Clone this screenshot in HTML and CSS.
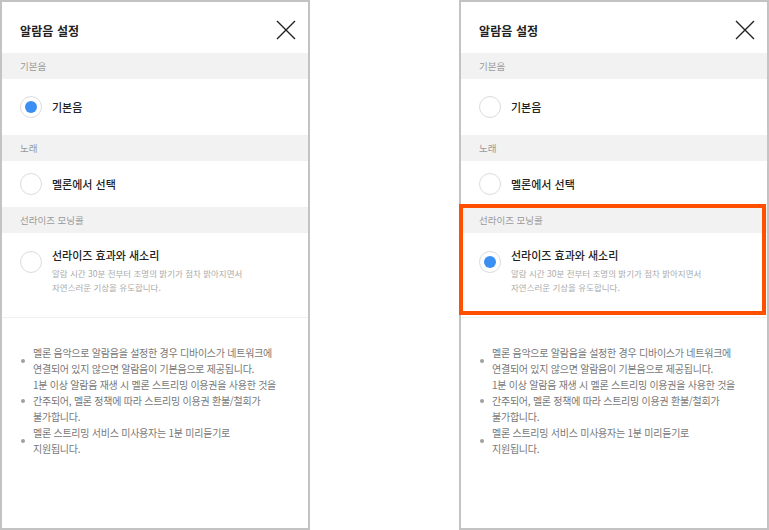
FILE: index.html
```html
<!DOCTYPE html>
<html lang="ko">
<head>
<meta charset="utf-8">
<title>알람음 설정</title>
<link rel="stylesheet" href="styles.css">
</head>
<body>
<div class="stage">
  <section class="panel">
    <header class="panel-head">
      <h1 class="panel-title">알람음 설정</h1>
      <button class="close" aria-label="닫기">
        <svg viewBox="0 0 20 20" width="20" height="20"><path d="M1 1L19 19M19 1L1 19" stroke="#222" stroke-width="1.4" fill="none"/></svg>
      </button>
    </header>
    <div class="group-label">기본음</div>
    <div class="option opt-basic"><span class="radio checked"></span><span class="opt-title">기본음</span></div>
    <div class="group-label">노래</div>
    <div class="option opt-song"><span class="radio"></span><span class="opt-title">멜론에서 선택</span></div>
    <div class="sunrise">
      <div class="group-label">선라이즈 모닝콜</div>
      <div class="option opt-sunrise">
        <span class="radio"></span>
        <div class="opt-body">
          <div class="opt-title">선라이즈 효과와 새소리</div>
          <p class="opt-desc">알람 시간 30분 전부터 조명의 밝기가 점차 밝아지면서<br>자연스러운 기상을 유도합니다.</p>
        </div>
      </div>
    </div>
    <ul class="notes">
      <li>멜론 음악으로 알람음을 설정한 경우 디바이스가 네트워크에<br>연결되어 있지 않으면 알람음이 기본음으로 제공됩니다.</li>
      <li>1분 이상 알람음 재생 시 멜론 스트리밍 이용권을 사용한 것을<br>간주되어, 멜론 정책에 따라 스트리밍 이용권 환불/철회가<br>불가합니다.</li>
      <li>멜론 스트리밍 서비스 미사용자는 1분 미리듣기로<br>지원됩니다.</li>
    </ul>
  </section>

  <section class="panel">
    <header class="panel-head">
      <h1 class="panel-title">알람음 설정</h1>
      <button class="close" aria-label="닫기">
        <svg viewBox="0 0 20 20" width="20" height="20"><path d="M1 1L19 19M19 1L1 19" stroke="#222" stroke-width="1.4" fill="none"/></svg>
      </button>
    </header>
    <div class="group-label">기본음</div>
    <div class="option opt-basic"><span class="radio"></span><span class="opt-title">기본음</span></div>
    <div class="group-label">노래</div>
    <div class="option opt-song"><span class="radio"></span><span class="opt-title">멜론에서 선택</span></div>
    <div class="sunrise highlight">
      <div class="group-label">선라이즈 모닝콜</div>
      <div class="option opt-sunrise">
        <span class="radio checked"></span>
        <div class="opt-body">
          <div class="opt-title">선라이즈 효과와 새소리</div>
          <p class="opt-desc">알람 시간 30분 전부터 조명의 밝기가 점차 밝아지면서<br>자연스러운 기상을 유도합니다.</p>
        </div>
      </div>
    </div>
    <ul class="notes">
      <li>멜론 음악으로 알람음을 설정한 경우 디바이스가 네트워크에<br>연결되어 있지 않으면 알람음이 기본음으로 제공됩니다.</li>
      <li>1분 이상 알람음 재생 시 멜론 스트리밍 이용권을 사용한 것을<br>간주되어, 멜론 정책에 따라 스트리밍 이용권 환불/철회가<br>불가합니다.</li>
      <li>멜론 스트리밍 서비스 미사용자는 1분 미리듣기로<br>지원됩니다.</li>
    </ul>
  </section>
</div>
</body>
</html>
```

FILE: styles.css
```css
* { box-sizing: border-box; }
html, body { margin: 0; padding: 0; background: #fff; }
body {
  font-family: "Noto Sans CJK KR", "Noto Sans", sans-serif;
  color: #222;
}
.stage {
  display: flex;
  gap: 149px;
  width: 769px;
  height: 530px;
}
.panel {
  width: 310px;
  height: 530px;
  border: 2px solid #c3c3c3;
  background: #fff;
  display: flex;
  flex-direction: column;
}
.panel-head {
  height: 51px;
  padding: 5px 12px 0 18px;
  display: flex;
  align-items: center;
  justify-content: space-between;
}
.panel-title {
  margin: 0;
  font-size: 12px;
  font-weight: 700;
  color: #222;
  letter-spacing: 0.1px;
}
.close {
  border: 0;
  padding: 0;
  background: none;
  width: 20px;
  height: 20px;
  display: block;
}
.close svg { display: block; }
.group-label {
  height: 26px;
  line-height: 26px;
  padding-left: 18px;
  background: #f2f2f2;
  font-size: 9.5px;
  color: #9a9a9a;
}
.option {
  display: flex;
  align-items: center;
  gap: 10px;
  padding-left: 18px;
}
.opt-basic { height: 56px; }
.opt-song { height: 46px; }
.opt-sunrise {
  align-items: flex-start;
  padding-top: 14px;
  height: 85px;
  border-bottom: 1px solid #f0f0f0;
}
.opt-sunrise .radio { margin-top: 4px; }
.radio {
  width: 22px;
  height: 22px;
  flex: none;
  border-radius: 50%;
  border: 1px solid #dcdcdc;
  background: #fff;
  display: flex;
  align-items: center;
  justify-content: center;
}
.radio.checked::after {
  content: "";
  width: 12px;
  height: 12px;
  border-radius: 50%;
  background: #3b8ff2;
}
.opt-title {
  font-size: 11px;
  font-weight: 500;
  color: #222;
  line-height: 16px;
}
.opt-desc {
  margin: 3px 0 0;
  font-size: 8.5px;
  line-height: 14px;
  color: #ababab;
}
.sunrise { position: relative; }
.highlight::after {
  content: "";
  position: absolute;
  left: -2px;
  right: 1px;
  top: -3px;
  bottom: 3px;
  border: 4px solid #ff5000;
  pointer-events: none;
}
.notes {
  list-style: none;
  margin: 0;
  padding: 27px 0 0 31px;
  font-size: 10px;
  line-height: 16px;
  color: #777;
  letter-spacing: -0.25px;
}
.notes li { position: relative; }
.notes li::before {
  content: "";
  position: absolute;
  left: -12px;
  top: 50%;
  width: 4px;
  height: 4px;
  margin-top: -2px;
  border-radius: 50%;
  background: #a0a0a0;
}
```
